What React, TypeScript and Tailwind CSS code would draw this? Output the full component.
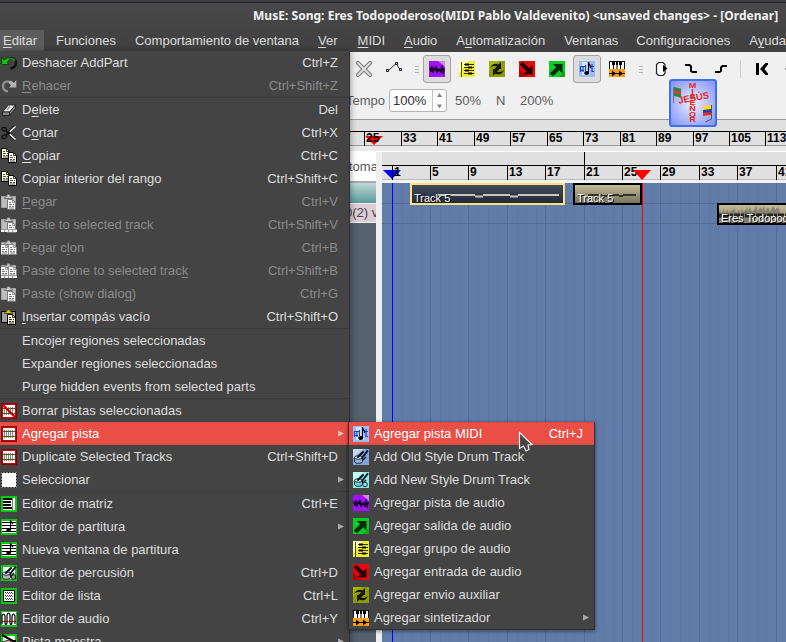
import type { ReactNode } from 'react';

type IconName =
  | 'undo' | 'redo' | 'eraser' | 'cut' | 'copy' | 'paste' | 'pasteTrack' | 'clone' | 'cloneTrack' | 'insert'
  | 'delTrack' | 'track' | 'select' | 'matrix' | 'score' | 'drum' | 'list' | 'wave' | 'master'
  | 'midi' | 'oldDrum' | 'newDrum' | 'audio' | 'output' | 'group' | 'input' | 'aux' | 'synth'
  | 'cross' | 'automation' | 'loop' | 'punchIn' | 'punchOut' | 'start' | 'rewind';

const page = (x: number, y: number, fill: string, line: string, edge: string) => (
  <>
    <path d={`M${x + 0.5} ${y + 0.5}h5l3 3v7h-8z`} fill={fill} stroke={edge} />
    <path d={`M${x + 5.5} ${y + 1}v2.500h3`} fill="none" stroke={edge} strokeWidth=".8" />
    <path
      d={`M${x + 2} ${y + 3.5}h2M${x + 2} ${y + 5.5}h3m1 0h1M${x + 2} ${y + 7.5}h2m1 0h2M${x + 2} ${y + 9}h5`}
      stroke={line}
      strokeWidth=".8"
    />
  </>
);

const clipboard = (on: boolean, mark: ReactNode = null) => (
  <>
    <path d="M.5 2.500h14v11H.5z" fill={on ? '#a0a0a0' : '#bdbdbd'} stroke={on ? '#000' : '#a5a5a5'} />
    <path d="M3.500 4.500v-1l2-1 1-2h2l1 2 2 1v1z" fill={on ? '#c9be1c' : '#c8c8c8'} stroke={on ? '#4a4500' : '#666'} strokeWidth=".9" />
    {mark ?? page(6, 5, on ? '#ffffdc' : '#fff', on ? '#000' : '#555', on ? '#000' : '#777')}
  </>
);

const trackStrip = (
  <>
    <path fill="#f4f4f4" d="M0 12h16v3H0z" />
    <path d="M0 12.500h16M3.500 13v2M7.500 13v2M11.500 13v2" stroke="#999" />
  </>
);

const rails = (
  <>
    <path fill="#8a0000" d="M0 0h16v16H0z" />
    <path fill="#cc0000" d="M1 1h14v14H1z" />
    <path fill="#fff" d="M2 2h12v12H2z" />
    <path d="M3.500 4v8M5.500 4v8M7.500 4v8M9.500 4v8M11.500 4v8" stroke="#8b8b8b" />
    <path d="M2 5.500h12M2 10.500h12" stroke="#4f5a18" />
  </>
);

const frame = (
  <>
    <path fill="#08c810" d="M0 0h16v16H0z" />
    <path fill="#fff" d="M2 2h12v12H2z" />
  </>
);

const drumKit = (body: string) => (
  <>
    <path d="M1.500 8.500v4c1 2.500 7 2.500 8 0v-4z" fill={body} stroke="#1b2534" />
    <ellipse cx="5.500" cy="8.500" rx="4" ry="1.700" fill="#e9f2fb" stroke="#1b2534" />
    <path d="M5 8l5-5M9 9l5.500-7" fill="none" stroke="#0c1420" strokeWidth="2" strokeLinecap="round" />
    <path d="M10 11l3-3" stroke="#0c1420" strokeWidth="1.500" />
  </>
);

const art: Record<IconName, ReactNode> = {
  undo: (
    <>
      <path d="M6 5c5-3 9-1 9 3s-3 5-5.500 5.500" fill="none" stroke="#101010" strokeWidth="2.400" />
      <path d="M7 4c4-1 6 0 6.500 2" fill="none" stroke="#18b818" strokeWidth="1.200" />
      <path d="M.7 2v7.500h7.500L6 7.500 9 4.500 7 2.500l-4 2.500z" fill="#16c016" stroke="#043804" strokeWidth=".8" />
    </>
  ),
  redo: (
    <>
      <path d="M11 5C6 2 2 4 2 8s2 4.500 5 5.500" fill="none" stroke="#8c8c8c" strokeWidth="2.400" />
      <path d="M15.300 2v7.500H8L10 7.500 7.500 4.500l2-2 3.500 2.500z" fill="#b5b5b5" />
    </>
  ),
  eraser: (
    <>
      <path d="M7.500 3h7l-6 7h-7z" fill="#f4f4f4" stroke="#1c1c1c" strokeWidth=".9" />
      <path d="M1.500 10h7v3.500h-7zM8.500 10l6-7v3.500l-6 7z" fill="#8a8a8a" stroke="#1c1c1c" strokeWidth=".9" />
      <path d="M6 8l3-3.500" stroke="#888" strokeWidth="1.200" />
    </>
  ),
  cut: (
    <>
      <path d="M6 9l8-7.500M6 7l8 7.500" stroke="#111" strokeWidth="3" />
      <path d="M8 7.500l6.500-6M8 8.500l6.500 6" stroke="#fff" strokeWidth="1.600" />
      <path d="M5 6l4 3M5 10l4-3" stroke="#0a0a0a" strokeWidth="1.600" />
      <ellipse cx="3.200" cy="4.200" rx="2.400" ry="1.700" transform="rotate(25 3.200 4.200)" fill="none" stroke="#0a0a0a" strokeWidth="1.300" />
      <ellipse cx="3.200" cy="11.800" rx="2.400" ry="1.700" transform="rotate(-25 3.200 11.800)" fill="none" stroke="#0a0a0a" strokeWidth="1.300" />
    </>
  ),
  copy: <>{page(0, 0, '#ffffd6', '#222', '#000')}{page(7, 4, '#ffffee', '#222', '#000')}</>,
  paste: clipboard(false),
  pasteTrack: <>{clipboard(false)}{trackStrip}</>,
  clone: clipboard(false, <>{page(-1, 4, '#fff', '#555', '#888')}{page(7, 4, '#fff', '#555', '#888')}</>),
  cloneTrack: (
    <>
      {clipboard(false, <>{page(-1, 3, '#fff', '#555', '#888')}{page(7, 3, '#fff', '#555', '#888')}</>)}
      {trackStrip}
    </>
  ),
  insert: clipboard(true),
  delTrack: <>{rails}<path d="M2 2l12 12" stroke="#c80000" strokeWidth="2.200" /></>,
  track: rails,
  select: (
    <>
      <path fill="#fff" d="M0 0h16v16H0z" />
      <path d="M.5.500h15v15H.5z" fill="none" stroke="#000" strokeDasharray="2 1" />
    </>
  ),
  matrix: (
    <>
      {frame}
      <path fill="#000" d="M2 2h9v2H2zM2 5h8v2H2zM2 8h8v2H2zM2 11h9v2H2z" />
      <path d="M11.500 2v12" stroke="#777" />
    </>
  ),
  score: (
    <>
      <path fill="#08c810" d="M0 0h16v16H0z" />
      <path fill="#fff" d="M1 2h14v12H1z" />
      <path d="M1 3.500h14M1 6.500h14M1 9.500h14M1 12.500h14" stroke="#000" />
      <path d="M9.500 1v10M9.500 2l2.500 3" stroke="#000" strokeWidth="1.200" fill="none" />
      <ellipse cx="7.500" cy="11" rx="2.300" ry="1.500" fill="#000" />
    </>
  ),
  drum: (
    <>
      {frame}
      {drumKit('#b4b4b4')}
      <circle cx="12.500" cy="12" r="2.300" fill="#999" stroke="#111" />
    </>
  ),
  list: (
    <>
      <path fill="#08c810" d="M0 0h16v16H0z" />
      <path d="M2.500 2.500h11v11h-11z" fill="#fff" stroke="#000" />
      <path d="M4 4.500h8M4 7.500h8M4 10.500h8" stroke="#222" strokeDasharray="1 1" />
      <path d="M5 5.500h7M5 8.500h7M5 11.500h7" stroke="#555" strokeDasharray="1 1" />
    </>
  ),
  wave: (
    <>
      <path fill="#08c810" d="M0 0h16v16H0z" />
      <path fill="#fff" d="M1 1h14v13H1z" />
      <path d="M1 10.500h14" stroke="#f02020" />
      <path d="M1 13V5q1.500-4 3 0v7q1 3 2 0V4q1.500-4 3 0v8q1 3 2 0V5q1.500-4 3 0v8" fill="none" stroke="#000" strokeWidth="1.200" />
    </>
  ),
  master: (
    <>
      {frame}
      <path d="M1 1l11 6" stroke="#000" strokeWidth="2" />
      <path d="M1 8l7-2 4 3-4 4-7-1z" fill="#f6a2a0" stroke="#333" />
      <path fill="#000" d="M11 6h4v3h-4z" />
    </>
  ),
  midi: (
    <>
      <path fill="#9cbcff" d="M0 0h16v16H0z" />
      <path fill="#d9e6ff" d="M3 1h8v13H3z" />
      <path d="M1 5.500h6M1 9.500h4" stroke="#1646c8" />
      <path d="M1.500 5v6M4 5v6M6.500 4v6M13 3v8M11.500 5.500H15M13 10.500h2" stroke="#1646c8" strokeWidth="1.200" />
      <path d="M9.500 1v11" stroke="#000" strokeWidth="1.300" />
      <path d="M9.500 1c0 3 2.500 3 2 6" stroke="#000" strokeWidth="1.300" fill="none" />
      <ellipse cx="7.700" cy="12" rx="2.500" ry="2" fill="#000" />
    </>
  ),
  oldDrum: (
    <>
      <path fill="#7fa4dc" d="M0 0h16v16H0z" />
      <path fill="#c2d6f5" d="M0 0h11L0 9z" />
      {drumKit('#91b5de')}
    </>
  ),
  newDrum: (
    <>
      <path fill="#8debe2" d="M0 0h16v16H0z" />
      <path fill="#c5fbf6" d="M0 0h11L0 9z" />
      {drumKit('#67d5d0')}
      <circle cx="12" cy="12.500" r="2.300" fill="#9ae8e2" stroke="#123" />
    </>
  ),
  audio: (
    <>
      <path fill="#a010ff" d="M0 0h16v16H0z" />
      <path fill="#d183ff" d="M9 0h7v6z" />
      <path
        d="M0 7h1l1 4 .8-6 1.200 7 1-5 1 2 1-4 1 7 1-4 1 2 1-2 1 4 1.300-8 .9 9 .8-5h1"
        fill="none"
        stroke="#12001e"
        strokeWidth="1.200"
      />
    </>
  ),
  output: (
    <>
      <path fill="#08cc20" d="M0 0h16v16H0z" />
      <path fill="#0fa51c" d="M10 16l6-6v6z" />
      <path d="M4 3h9.500v9.500l-3.200-3.200L4 15.300.8 12.500 7.200 6.200z" fill="#062a0a" />
    </>
  ),
  group: (
    <>
      <path fill="#eeea38" d="M0 0h16v16H0z" />
      <path fill="#ffffa8" d="M0 0h10L0 12z" />
      <path d="M2.500 1v15" stroke="#4a4a10" />
      <path d="M5 3.500h10M5 6.500h10M5 9.500h10M5 12.500h10" stroke="#333314" />
      <path d="M6 2.500h4v2H6zM9 5.500h4v2H9zM6 8.500h4v2H6zM9 11.500h4v2H9z" fill="#080800" />
    </>
  ),
  input: (
    <>
      <path fill="#ee0606" d="M0 0h16v16H0z" />
      <path fill="#b90000" d="M0 8l8 8H0z" />
      <path d="M.8 3.500L3.500.8l6.800 6.400L13.500 4v9.500H4l3.200-3.200z" fill="#260000" />
    </>
  ),
  aux: (
    <>
      <path fill="#8f9b00" d="M0 0h16v16H0z" />
      <path fill="#a8b400" d="M0 0h10L0 10z" />
      <path d="M1 7C3 2 7 2 9.500 3.500L12 1v7H5.500L8 5.500C6 4.500 3 5 1 7z" fill="#161900" />
      <path d="M15 9c-2 5-6 5-8.500 3.500L4 15V8h6.500L8 10.500c2 1 5 .5 7-1.500z" fill="#161900" />
    </>
  ),
  synth: (
    <>
      <path fill="#ff9c10" d="M0 0h16v16H0z" />
      <path fill="#fff" d="M1 1h14v7H1z" />
      <path d="M.5 0v8M15.500 0v8M0 .5h16" stroke="#111" />
      <path d="M4 0h1v8H4zM3 1h3v3H3zM7.500 0h1v8h-1zM7 1h2v3H7zM11 0h1v8h-1zM10 1h3v3h-3z" fill="#000" />
      <path d="M0 12.500h16" stroke="#000" />
      <path d="M3 9.500l4 3-4 3zM10 9.500l4 3-4 3z" fill="#000" />
    </>
  ),
  cross: (
    <>
      <path d="M2 2l12 12M14 2L2 14" stroke="#777" strokeWidth="4" strokeLinecap="round" />
      <path d="M2 2l12 12M14 2L2 14" stroke="#e5e5e5" strokeWidth="1.800" strokeLinecap="round" />
    </>
  ),
  automation: (
    <>
      <path d="M3 9l7-6.500 4 6" fill="none" stroke="#333" />
      <path d="M.5 8.500h2v2h-2zM9.500 1.500h2v2h-2zM13.500 7.500h2v2h-2z" fill="#fff" stroke="#0c1650" />
    </>
  ),
  loop: (
    <>
      <path d="M5.500 1.500H10l2 2v9l-2 2H5.500l-2-2v-9z" fill="#f8f8f8" stroke="#222" strokeWidth="1.200" />
      <path d="M10 4l4.500 3.500L10 11z" fill="#000" />
    </>
  ),
  punchIn: <path d="M2 4h4.500l1.500 1.500V10l1.500 1H14" fill="none" stroke="#000" strokeWidth="2" />,
  punchOut: <path d="M2 11h4.500L8 10V6.500L9.500 5H14" fill="none" stroke="#000" strokeWidth="2" />,
  start: <path d="M2 2h3v12H2zM14 2h-2.500L6 8l5.500 6H14v-1.500L10.500 8 14 3.500z" fill="#000" />,
  rewind: <path d="M8 2L1 8l7 6h3L6 8l5-6z" fill="#000" />,
};

const Icon = ({ name }: { name: IconName }) => (
  <svg width="16" height="16" viewBox="0 0 16 16" className="shrink-0">
    {art[name]}
  </svg>
);

/* An ampersand marks the mnemonic letter that follows it. */
const Label = ({ text }: { text: string }) => {
  const at = text.indexOf('&');
  if (at < 0) return <span>{text}</span>;
  return (
    <span>
      {text.slice(0, at)}
      <span className="underline decoration-1 underline-offset-2">{text[at + 1]}</span>
      {text.slice(at + 2)}
    </span>
  );
};

interface Item {
  text: string;
  icon?: IconName;
  keys?: string;
  off?: boolean;
  sub?: boolean;
  hot?: boolean;
  line?: boolean;
}

const editItems: Item[] = [
  { text: 'Deshacer AddPart', icon: 'undo', keys: 'Ctrl+Z' },
  { text: '&Rehacer', icon: 'redo', keys: 'Ctrl+Shift+Z', off: true },
  { text: 'D&elete', icon: 'eraser', keys: 'Del', line: true },
  { text: 'C&ortar', icon: 'cut', keys: 'Ctrl+X' },
  { text: '&Copiar', icon: 'copy', keys: 'Ctrl+C' },
  { text: 'Copiar interior del rango', icon: 'copy', keys: 'Ctrl+Shift+C' },
  { text: '&Pegar', icon: 'paste', keys: 'Ctrl+V', off: true },
  { text: 'Paste to selected &track', icon: 'pasteTrack', keys: 'Ctrl+Shift+V', off: true },
  { text: 'Pegar c&lon', icon: 'clone', keys: 'Ctrl+B', off: true },
  { text: 'Paste clone to selected trac&k', icon: 'cloneTrack', keys: 'Ctrl+Shift+B', off: true },
  { text: 'Paste (show dialo&g)', icon: 'paste', keys: 'Ctrl+G', off: true },
  { text: '&Insertar compás vacío', icon: 'insert', keys: 'Ctrl+Shift+O' },
  { text: 'Encojer regiones seleccionadas', line: true },
  { text: 'Expander regiones seleccionadas' },
  { text: 'Purge hidden events from selected parts' },
  { text: 'Borrar pistas seleccionadas', icon: 'delTrack', line: true },
  { text: 'Agregar pista', icon: 'track', sub: true, hot: true },
  { text: 'Duplicate Selected Tracks', icon: 'track', keys: 'Ctrl+Shift+D' },
  { text: 'Seleccionar', icon: 'select', sub: true },
  { text: 'Editor de matriz', icon: 'matrix', keys: 'Ctrl+E', line: true },
  { text: 'Editor de partitura', icon: 'score', sub: true },
  { text: 'Nueva ventana de partitura', icon: 'score' },
  { text: 'Editor de percusión', icon: 'drum', keys: 'Ctrl+D' },
  { text: 'Editor de lista', icon: 'list', keys: 'Ctrl+L' },
  { text: 'Editor de audio', icon: 'wave', keys: 'Ctrl+Y' },
  { text: 'Pista maestra', icon: 'master', sub: true },
];

const trackItems: Item[] = [
  { text: 'Agregar pista MIDI', icon: 'midi', keys: 'Ctrl+J', hot: true },
  { text: 'Add Old Style Drum Track', icon: 'oldDrum' },
  { text: 'Add New Style Drum Track', icon: 'newDrum' },
  { text: 'Agregar pista de audio', icon: 'audio' },
  { text: 'Agregar salida de audio', icon: 'output' },
  { text: 'Agregar grupo de audio', icon: 'group' },
  { text: 'Agregar entrada de audio', icon: 'input' },
  { text: 'Agregar envio auxiliar', icon: 'aux' },
  { text: 'Agregar sintetizador', icon: 'synth', sub: true },
];

const MenuRow = ({ item, inset }: { item: Item; inset: string }) => (
  <>
    {item.line && <div className="h-px bg-[#3a3a3a]" />}
    <div
      className={`flex h-[23px] items-center pr-[11px] ${inset} ${
        item.hot
          ? 'border-y border-[#dd4a41] bg-[#e94f47] text-white'
          : item.off
            ? 'text-[#8b8b8b]'
            : 'text-[#dedede]'
      }`}
    >
      <div className="flex w-[21px] shrink-0">{item.icon && <Icon name={item.icon} />}</div>
      <Label text={item.text} />
      <span className="ml-auto">{item.keys}</span>
      {item.sub && (
        <svg width="6" height="7" viewBox="0 0 6 7" className="-mr-[6px]">
          <path d="M0 .5L6 3.500L0 6.500z" fill={item.hot ? '#f5b9b5' : '#aaa'} />
        </svg>
      )}
    </div>
  </>
);

const Tool = ({ name, on = false }: { name: IconName; on?: boolean }) => (
  <div className="flex w-[30px] shrink-0 justify-center">
    <div
      className={`flex h-7 w-7 items-center justify-center rounded-[3px] border ${
        on ? 'border-[#a3a3a3] bg-[#dcdcdc]' : 'border-transparent'
      }`}
    >
      <Icon name={name} />
    </div>
  </div>
);

const Grip = () => (
  <div className="flex w-[14px] shrink-0 flex-col items-center gap-[2px] pl-[3px]">
    <i className="h-px w-1 bg-[#b5b5b5]" />
    <i className="h-px w-1 bg-[#b5b5b5]" />
    <i className="h-px w-1 bg-[#b5b5b5]" />
  </div>
);

const menus: { text: string; box: string }[] = [
  { text: '&Editar', box: 'bg-[#5c5c5c] pr-[7px] pl-[3px]' },
  { text: 'Funciones', box: 'px-[7px]' },
  { text: 'Comportamiento de ventana', box: 'px-[7px]' },
  { text: '&Ver', box: 'pr-2 pl-[7px]' },
  { text: '&MIDI', box: 'px-[7px]' },
  { text: '&Audio', box: 'px-[7px]' },
  { text: 'A&utomatización', box: 'px-[7px]' },
  { text: 'Ventanas', box: 'pr-[6px] pl-[7px]' },
  { text: 'Configuraciones', box: 'px-[7px]' },
  { text: 'A&yuda', box: 'px-[7px]' },
];

const overview: [number, number][] = [
  [25, 37], [33, 36], [41, 37], [49, 36], [57, 37], [65, 36], [73, 37], [81, 36], [89, 37], [97, 36], [105, 36], [113, 37],
];
const bars: [number, number][] = [
  [1, 38], [5, 38], [9, 39], [13, 38], [17, 39], [21, 38], [25, 38], [29, 39], [33, 38], [37, 39], [41, 38],
];

const Ruler = ({ cells, pad }: { cells: [number, number][]; pad: string }) => (
  <div className={`relative flex h-[15px] border-t border-black ${pad}`}>
    {cells.map(([n, width]) => (
      <div
        key={n}
        style={{ width }}
        className="shrink-0 border-l border-black pl-px text-[12px] leading-[13px] font-bold text-black"
      >
        {n}
      </div>
    ))}
  </div>
);

const Logo = () => (
  <div className="absolute top-[79px] left-[669px] h-12 w-12 overflow-hidden rounded-[3px] border-2 border-[#3d71ed] bg-radial from-[#f0f0ff] to-[#8390f4] font-bold text-[#e02a22]">
    <svg width="44" height="44" viewBox="0 0 44 44" className="absolute inset-0">
      <path d="M2.500 6v16" stroke="#778" />
      <path fill="#278a3a" d="M3 6l7 1.500v9L3 15z" />
      <path fill="#d63c35" d="M3 9l7 1.500v3L3 12z" />
      <path d="M40.500 24v14l-6 3" fill="none" stroke="#556" />
      <path fill="#ffdf20" d="M32 25l8-1v10l-8 1z" />
      <path fill="#263faf" d="M32 29l8-1v4l-8 1z" />
      <path fill="#e02c28" d="M32 32l8-1v3l-8 1z" />
    </svg>
    <div className="absolute top-[2px] left-[17px] flex w-[9px] scale-x-130 flex-col items-center text-[7px] leading-[5.700px]">
      {'MISEÑOR'.split('').map((c) => (
        <span key={c}>{c}</span>
      ))}
    </div>
    <div className="absolute top-[11px] left-[7px] -rotate-10 text-[9.500px] leading-[12px]">JESÚS</div>
  </div>
);

function PartName({ text }: { text: string }) {
  return (
    <span className="absolute -bottom-px left-[2px] text-[11px] leading-[11px] text-white [text-shadow:1px_1px_0_#000]">
      {text}
    </span>
  );
}

export default function App() {
  return (
    <div className="relative flex h-[642px] w-[786px] flex-col overflow-hidden bg-[#f0f0f0] font-['Liberation_Sans',Arial,sans-serif] text-[13px] leading-[15px] whitespace-nowrap">
      <header className="h-[52px] shrink-0 bg-linear-to-b from-[#494949] to-[#404040] text-[#dcdcdc]">
        <div className="h-[3px] border-b border-[#222426] bg-[#3d3f42]" />
        <div className="h-[27px] pl-[253px] font-['Noto_Sans',sans-serif] text-[12px] leading-[25px] font-bold tracking-[0.025px] text-[#f2f2f2]">
          MusE: Song: Eres Todopoderoso(MIDI Pablo Valdevenito) &lt;unsaved changes&gt; - [Ordenar]
        </div>
        <nav className="flex h-[21px] gap-[5px]">
          {menus.map((m) => (
            <div key={m.text} className={`flex shrink-0 items-center ${m.box}`}>
              <Label text={m.text} />
            </div>
          ))}
        </nav>
      </header>

      <section className="flex h-[67px] shrink-0 flex-col">
        <div className="flex h-[34px] items-center pl-[349px]">
          <Tool name="cross" />
          <Tool name="automation" />
          <div className="-ml-px flex">
            <Grip />
          </div>
          <Tool name="audio" on />
          <Tool name="group" />
          <Tool name="aux" />
          <Tool name="input" />
          <Tool name="output" />
          <Tool name="midi" on />
          <Tool name="synth" />
          <Grip />
          <Tool name="loop" />
          <Tool name="punchIn" />
          <Tool name="punchOut" />
          <div className="mr-[6px] ml-[4px] h-[18px] w-px shrink-0 bg-[#cfcfcf]" />
          <Tool name="start" />
          <Tool name="rewind" />
        </div>
        <div className="-mt-px flex h-[30px] items-center pl-[346px] text-[#5c5c5c]">
          <span className="w-[43px]">Tempo</span>
          <div className="flex h-[23px] w-[58px] rounded-[3px] border border-[#b4b4b4] bg-[#fcfcfc]">
            <span className="w-[43px] border-r border-[#c6c6c6] pl-[3px] leading-[21px] text-[#303030]">100%</span>
            <svg width="13" height="21" viewBox="0 0 13 21">
              <path d="M4 7L6.500 3L9 7zM4 14.500L6.500 18.500L9 14.500z" fill="#858585" />
            </svg>
          </div>
          <span className="ml-2 w-[41px]">50%</span>
          <span className="w-6">N</span>
          <span>200%</span>
        </div>
      </section>

      <section className="relative h-[27px] shrink-0 border-y border-[#999] bg-[#e0e0e0] pt-[11px]">
        <svg width="18" height="10" viewBox="0 0 18 10" className="absolute top-[16px] left-[365px]">
          <path d="M0 0h18L9 9z" fill="#f00" />
        </svg>
        <Ruler cells={overview} pad="pl-[364px]" />
      </section>
      <div className="h-[6px] shrink-0 border-b border-white bg-[#e9e9e9]" />

      <section className="flex min-h-0 flex-1">
        <aside className="flex w-[376px] shrink-0 flex-col bg-[#55616f]">
          <div className="h-[29px] bg-white pl-[349px] leading-[29px] text-[#555]">toma</div>
          <div className="h-[2px] bg-[#aaa]" />
          <div className="h-[20px] bg-linear-to-b from-[#bdd8d8] to-[#5d9999]" />
          <div className="h-[20px] border-y border-[#eee] bg-[#dccdd6] pl-[345px] leading-[17px] text-[#444]">
            <div className="w-[31px] overflow-hidden">0(2) v</div>
          </div>
        </aside>
        <div className="w-[6px] shrink-0 bg-[#efefef]" />
        <main className="relative flex min-w-0 flex-1 flex-col">
          <div className="relative h-[28px] shrink-0 border-b border-[#bbb] bg-[#e0e0e0] pt-[13px]">
            <svg width="18" height="10" viewBox="0 0 18 10" className="absolute top-[18px] left-px">
              <path d="M0 0h18L9 9z" fill="#00f" />
            </svg>
            <Ruler cells={bars} pad="pl-[10px]" />
          </div>
          <div className="h-[3px] shrink-0 bg-[#f3f3f3]" />
          <div className="relative flex flex-1 bg-[#617ca9] pl-[10px]">
            {bars.map(([n, width]) => (
              <div key={n} style={{ width }} className="flex shrink-0 border-l border-[#536d9a]">
                <div className="flex-1" />
                <div className="flex-1 border-l border-[#5d78a4]" />
                <div className="flex-1 border-l border-[#5d78a4]" />
                <div className="flex-1 border-l border-[#5d78a4]" />
              </div>
            ))}
            <div className="absolute inset-x-0 top-[20px] h-[21px] border-y border-[#526a94]" />
            <div className="absolute inset-y-0 left-[10px] w-px bg-[#00f]" />
            <div className="absolute top-0 left-[28px] h-[22px] w-[155px] border-2 border-[#ffe182] bg-linear-to-b from-[#424c5d] to-[#222a37]">
              <svg width="151" height="18" viewBox="0 0 151 18" className="absolute inset-0">
                <path d="M26 10h37m8 0h27m8 0h41M63 11.500h8m27 0h8" stroke="#c5c5c2" strokeWidth="2" />
              </svg>
              <PartName text="Track 5" />
            </div>
            <div className="absolute top-0 left-[191px] h-[22px] w-[69px] border-2 border-black bg-linear-to-b from-[#c5bc98] to-[#77735f]">
              <svg width="65" height="18" viewBox="0 0 65 18" className="absolute inset-0">
                <path d="M13 10h14m5 0h12m4 0h13M27 11h5m12 0h4" stroke="#34342f" strokeWidth="2" />
              </svg>
              <PartName text="Track 5" />
            </div>
            <div className="absolute top-[20px] left-[335px] h-[22px] w-[90px] overflow-hidden border-2 border-black bg-linear-to-b from-[#c5bc98] to-[#8a846b]">
              <svg width="90" height="18" viewBox="0 0 90 18" className="absolute inset-0">
                <path
                  d="M0 11V8l1-4 1 5 2-3 1-3 1 6 3-5 1 5 2-4 2 1 1-4 2 6 3-3 2 4 1-7 1 5 3-2 1-4 1 6 2-5 2 5 3-3 1-4 2 7 2-5 2 3 2-4 1 6 3-5 2 5 3-6 2 4 3-3 2 5v12H0z"
                  fill="#858170"
                />
                <path d="M0 10.500h90" stroke="#252622" strokeWidth="4" strokeDasharray="3 1 6 1" />
              </svg>
              <PartName text="Eres Todopoderoso" />
            </div>
            <div className="absolute inset-y-0 left-[260px] w-px bg-[#f00]" />
          </div>
          <div className="absolute top-0 left-[202px] h-[14px] w-px bg-black" />
          <svg width="18" height="10" viewBox="0 0 18 10" className="absolute top-[18px] left-[251px]">
            <path d="M0 0h18L9 10z" fill="#f00" />
          </svg>
        </main>
      </section>

      <Logo />

      <div className="absolute top-[51px] left-0 w-[350px] border-r border-[#303030] bg-[#444] shadow-[1px_0_6px_rgba(0,0,0,0.35)]">
        {editItems.map((item) => (
          <MenuRow key={item.text} item={item} inset="pl-px" />
        ))}
      </div>

      <div className="absolute top-[422px] left-[348px] w-[247px] border-x border-b border-[#303030] bg-[#444] shadow-[0_1px_4px_rgba(0,0,0,0.5)]">
        {trackItems.map((item) => (
          <MenuRow key={item.text} item={item} inset="pl-1" />
        ))}
      </div>

      <svg width="16" height="22" viewBox="0 0 16 22" className="absolute top-[431px] left-[518px]">
        <path d="M1.500 1.500v16l4-2.500 2.500 5 3-1.500-1-4.500 4-.5z" fill="#444" stroke="#f2f2f2" strokeWidth="1.200" />
      </svg>
    </div>
  );
}
